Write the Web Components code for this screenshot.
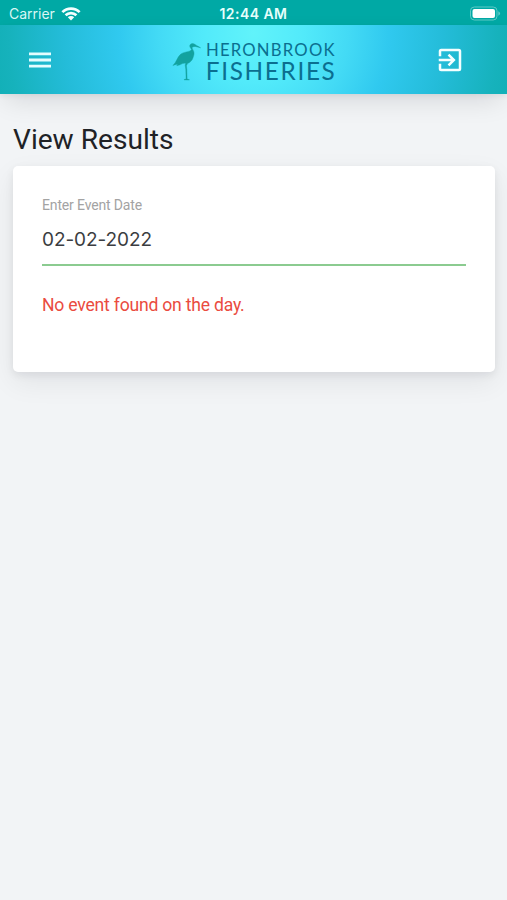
<!DOCTYPE html>
<html lang="en">
<head>
<meta charset="utf-8">
<title>View Results</title>
<style>
html,body{margin:0;height:100%;background:#f2f4f6;font-family:Roboto,"Liberation Sans",sans-serif}
</style>
</head>
<body>
<fishery-app></fishery-app>
<script>
const define = (name, html) => customElements.define(name, class extends HTMLElement {
  constructor() {
    super();
    this.attachShadow({ mode: 'open' }).innerHTML = html;
  }
});

define('status-bar', `
<style>
:host{display:grid;grid-template-columns:1fr auto 1fr;align-items:center;height:25px;padding:3px 6px 0 9px;box-sizing:border-box;background:#00a9a5;color:#d9f7f4;font:400 14px/22px Inter,sans-serif}
.left{display:flex;align-items:center;gap:6px}
.left svg{margin-top:-2px}
.time{font-weight:600;font-size:14px;letter-spacing:.45px;color:#e6fffc;margin-left:-3px}
.batt{justify-self:end;display:block;width:32px;height:15px;margin-top:-2px}
</style>
<div class="left"><span><slot></slot></span>
<svg width="20" height="15" viewBox="0 0 20 15" fill="none" stroke="#f4ffff" stroke-width="2.7"><path d="M1.4 6.1a12.2 12.2 0 0 1 17.2 0"/><path d="M4.6 9.3a7.7 7.7 0 0 1 10.8 0"/><path d="M10 14.4 6.8 11.3a4.6 4.6 0 0 1 6.4 0z" fill="#f4ffff" stroke="none"/></svg></div>
<span class="time"><slot name="time"></slot></span>
<svg class="batt" viewBox="0 0 32 15"><rect x="1.5" y="1" width="26.5" height="13" rx="3.8" fill="none" stroke="#5fcac6" stroke-width="1"/><rect x="3.5" y="3" width="22.5" height="9" rx="2" fill="#fff"/><path d="M29.3 5.2q1.8.8 1.8 2.3t-1.8 2.3z" fill="#5fcac6"/></svg>`);

define('brand-logo', `
<style>:host{display:block;width:166px;height:52px}svg{display:block;overflow:visible}text{font-family:Lato,sans-serif;fill:#0b6f90}</style>
<svg width="166" height="52" viewBox="171 35 166 52">
<path fill="#12a29f" stroke="#12a29f" stroke-width=".4" d="M200.6 47.8 195 46.4c-1.3.3-2.4.2-2.8 1-.5 1.1 1.3 2.7 1.7 4.6.5 2.4-.4 4-.9 5.7-.6 2.4-2.6 4.6-5.5 5.9l-1.1 2.1.4 3.4.3 10 2.2.6v.3l-5.2-.1.1-.4 1.9-.4-.3-9.6-.6-4.2.5-2.3-3.3.6c-2 1.3-3.9 1.7-5.6 2.2l.8-1.9-4.7 1.6c3.8-3.6 4-7.7 7.4-10.9 2.8-2.7 6.3-2.2 9.7-3.7 1.4-.7 1.9-1.1 1.1-2.1-1.3-1.7-1.9-3-.8-4.3 1.1-1.2 3.1-1.2 4.5-.2 1.5 1.3 3.8 2 5.8 3.5z"/>
<text x="206" y="56" font-size="16.7" textLength="128.5">HERONBROOK</text>
<text x="205.8" y="80" font-size="24.3" textLength="129">FISHERIES</text>
</svg>`);

define('app-header', `
<style>
:host{display:flex;align-items:center;justify-content:space-between;height:69px;padding:0 42.5px 0 25px;box-sizing:border-box;background:radial-gradient(circle at 50% 12%,#61f3fa 0,#52eafa 50px,#43daf5 95px,#30c9ef 135px,#24bcd9 190px,#16b2bc 245px,#13b0b8 260px);box-shadow:0 10px 28px -6px rgba(0,10,20,.14),0 2px 5px rgba(0,10,20,.05);position:relative}
svg{display:block}
brand-logo{margin-left:19px;margin-top:3px}
</style>
<svg width="30" height="30" viewBox="0 0 30 30" fill="#e4fdff"><path d="M4 7.5h22v2.8H4zM4 13.6h22v2.8H4zM4 19.7h22v2.8H4z"/></svg>
<brand-logo></brand-logo>
<svg width="30" height="30" viewBox="0 0 24 24" fill="#f4ffff"><path d="M10.09 15.59 11.5 17l5-5-5-5-1.41 1.41L12.67 11H3v2h9.67l-2.58 2.59zM19 3H5a2 2 0 0 0-2 2v4h2V5h14v14H5v-4H3v4a2 2 0 0 0 2 2h14a2 2 0 0 0 2-2V5a2 2 0 0 0-2-2z"/></svg>`);

define('result-card', `
<style>
:host{display:block;box-sizing:border-box;height:206px;padding:29px 29px 0;background:#fff;border-radius:5px;box-shadow:0 10px 28px rgba(0,20,30,.07),0 3px 8px rgba(0,20,30,.07)}
</style><slot></slot>`);

define('date-field', `
<style>
:host{display:block;border-bottom:2px solid #8bcb90;height:69px}
.label{font-size:14px;letter-spacing:-.15px;line-height:20px;color:#a3a3a3}
.value{font:400 19px/28px Inter,sans-serif;letter-spacing:-.08px;margin-top:11px;color:#3b3d41}
</style><div class="label"><slot name="label"></slot></div><div class="value"><slot></slot></div>`);

define('error-message', `<style>:host{display:block;margin-top:27px;font-size:17.6px;letter-spacing:-.22px;line-height:24px;color:#ea4b40}</style><slot></slot>`);

define('fishery-app', `
<style>
:host{display:block;min-height:100vh;background:#f2f4f6}
main{padding:28px 12px 0 13px}
h1{margin:0 0 9px;font-weight:400;font-size:28.1px;line-height:35px;color:#202226}
</style>
<status-bar>Carrier<span slot="time">12:44 AM</span></status-bar>
<app-header></app-header>
<main><h1>View Results</h1>
<result-card><date-field><span slot="label">Enter Event Date</span>02-02-2022</date-field><error-message>No event found on the day.</error-message></result-card></main>`);
</script>
</body>
</html>
